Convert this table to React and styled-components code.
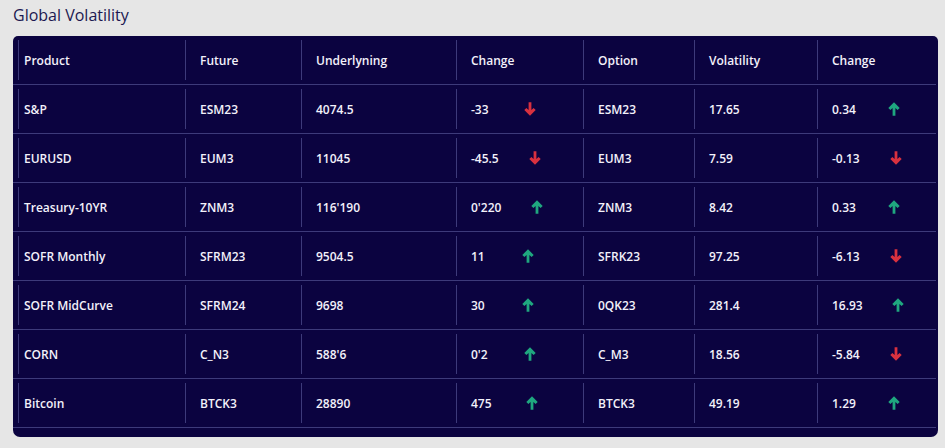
import React from 'react';
import styled, { createGlobalStyle } from 'styled-components';

const GlobalStyle = createGlobalStyle`
  body {
    margin: 0;
    background: #e6e6e6;
    font-family: 'Open Sans', 'Liberation Sans', sans-serif;
  }
`;

const Page = styled.div`
  padding: 4px 7px 11px 13px;
`;

const Title = styled.h2`
  margin: 0 0 10px;
  font-size: 16px;
  font-weight: 400;
  line-height: 22px;
  color: #1b1850;
`;

const Panel = styled.div`
  background: #0b0340;
  border-radius: 5px 5px 7px 7px;
  padding: 0 2px 9px 0;
  color: #f3f1fa;
  font-size: 12px;
  font-weight: 600;
`;

const Row = styled.div`
  display: grid;
  grid-template-columns: 167px 116px 155px 127px 111px 123px 1fr;
  padding: 4px 0 4px 5px;
  border-bottom: 1px solid #3d3a7a;
`;

const Cell = styled.div`
  height: 40px;
  display: flex;
  align-items: center;
  border-left: 1px solid #3d3a7a;
  padding-left: ${(p) => (p.$first ? '5px' : '14px')};
`;

const ChangeBox = styled.div`
  width: 101px;
  display: flex;
  align-items: center;
`;

const ArrowSlot = styled.span`
  flex: 1;
  display: flex;
  justify-content: center;
  color: ${(p) => (p.$up ? '#1fa77f' : '#d9313f')};
`;

function Arrow({ up }) {
  return (
    <ArrowSlot $up={up}>
      <svg width="12" height="14" viewBox="0 0 12 14" style={up ? null : { transform: 'rotate(180deg)' }}>
        <path fill="currentColor" d="M6 0.3 L11.7 6 L9.6 8.1 L7.4 5.9 V13.7 H4.6 V5.9 L2.4 8.1 L0.3 6 Z" />
      </svg>
    </ArrowSlot>
  );
}

function Change({ value, up }) {
  return (
    <ChangeBox>
      <span>{value}</span>
      <Arrow up={up} />
    </ChangeBox>
  );
}

const rows = [
  ['S&P', 'ESM23', '4074.5', '-33', false, 'ESM23', '17.65', '0.34', true],
  ['EURUSD', 'EUM3', '11045', '-45.5', false, 'EUM3', '7.59', '-0.13', false],
  ['Treasury-10YR', 'ZNM3', "116'190", "0'220", true, 'ZNM3', '8.42', '0.33', true],
  ['SOFR Monthly', 'SFRM23', '9504.5', '11', true, 'SFRK23', '97.25', '-6.13', false],
  ['SOFR MidCurve', 'SFRM24', '9698', '30', true, '0QK23', '281.4', '16.93', true],
  ['CORN', 'C_N3', "588'6", "0'2", true, 'C_M3', '18.56', '-5.84', false],
  ['Bitcoin', 'BTCK3', '28890', '475', true, 'BTCK3', '49.19', '1.29', true],
];

const headers = ['Product', 'Future', 'Underlyning', 'Change', 'Option', 'Volatility', 'Change'];

export default function App() {
  return (
    <Page>
      <GlobalStyle />
      <Title>Global Volatility</Title>
      <Panel>
        <Row>
          {headers.map((h, i) => (
            <Cell key={i} $first={i === 0}>{h}</Cell>
          ))}
        </Row>
        {rows.map((r) => (
          <Row key={r[0]}>
            <Cell $first>{r[0]}</Cell>
            <Cell>{r[1]}</Cell>
            <Cell>{r[2]}</Cell>
            <Cell><Change value={r[3]} up={r[4]} /></Cell>
            <Cell>{r[5]}</Cell>
            <Cell>{r[6]}</Cell>
            <Cell><Change value={r[7]} up={r[8]} /></Cell>
          </Row>
        ))}
      </Panel>
    </Page>
  );
}
